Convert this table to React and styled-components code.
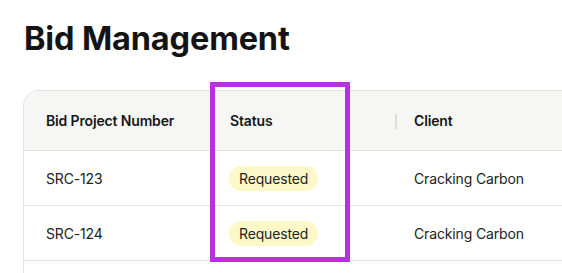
import React from 'react'
import styled, { createGlobalStyle } from 'styled-components'

const GlobalStyle = createGlobalStyle`
  html, body {
    margin: 0;
    background: #ffffff;
    font-family: Inter, "Noto Sans", sans-serif;
    color: #1c1c1c;
  }
`

const Page = styled.div`
  position: relative;
  width: 562px;
  height: 273px;
  overflow: hidden;
  box-sizing: border-box;
  padding: 23px 0 0 23px;
`

const Title = styled.h1`
  margin: 0 0 35px 1px;
  font-size: 32.5px;
  line-height: 32px;
  font-weight: 700;
  letter-spacing: -0.15px;
  color: #141414;
`

const Card = styled.div`
  width: 640px;
  border: 1px solid #e3e3e3;
  border-right: none;
  border-bottom: none;
  border-top-left-radius: 16px;
  overflow: hidden;
`

const Row = styled.div`
  display: grid;
  grid-template-columns: 185px 184px 1fr;
  height: ${p => (p.$head ? '59px' : '54px')};
  background: ${p => (p.$head ? '#f6f6f5' : '#ffffff')};
  border-bottom: 1px solid #e3e3e3;
`

const Cell = styled.div`
  position: relative;
  display: flex;
  align-items: center;
  padding-left: ${p => (p.$first ? '22px' : '21px')};
  font-size: 14px;
  font-weight: ${p => (p.$head ? 600 : 400)};
  color: ${p => (p.$head ? '#161616' : '#222222')};
  letter-spacing: -0.15px;
`

const Resizer = styled.span`
  position: absolute;
  left: 2px;
  top: 23px;
  width: 2px;
  height: 15px;
  background: #dcdcdc;
`

const Badge = styled.span`
  display: inline-flex;
  align-items: center;
  height: 25px;
  padding: 0 10px;
  margin-left: -1px;
  border-radius: 13px;
  background: #fdf8c8;
  color: #1e1e1e;
  font-size: 14px;
`

const Highlight = styled.div`
  position: absolute;
  left: 210px;
  top: 82px;
  width: 140px;
  height: 180px;
  box-sizing: border-box;
  border: 5px solid #b830e0;
  pointer-events: none;
`

const bids = [
  { number: 'SRC-123', status: 'Requested', client: 'Cracking Carbon' },
  { number: 'SRC-124', status: 'Requested', client: 'Cracking Carbon' },
]

export default function App() {
  return (
    <>
      <GlobalStyle />
      <Page>
        <Title>Bid Management</Title>
        <Card>
          <Row $head>
            <Cell $head $first>Bid Project Number</Cell>
            <Cell $head>Status</Cell>
            <Cell $head>
              <Resizer />
              Client
            </Cell>
          </Row>
          {bids.map(b => (
            <Row key={b.number}>
              <Cell $first>{b.number}</Cell>
              <Cell>
                <Badge>{b.status}</Badge>
              </Cell>
              <Cell>{b.client}</Cell>
            </Row>
          ))}
          <Row />
        </Card>
        <Highlight />
      </Page>
    </>
  )
}
